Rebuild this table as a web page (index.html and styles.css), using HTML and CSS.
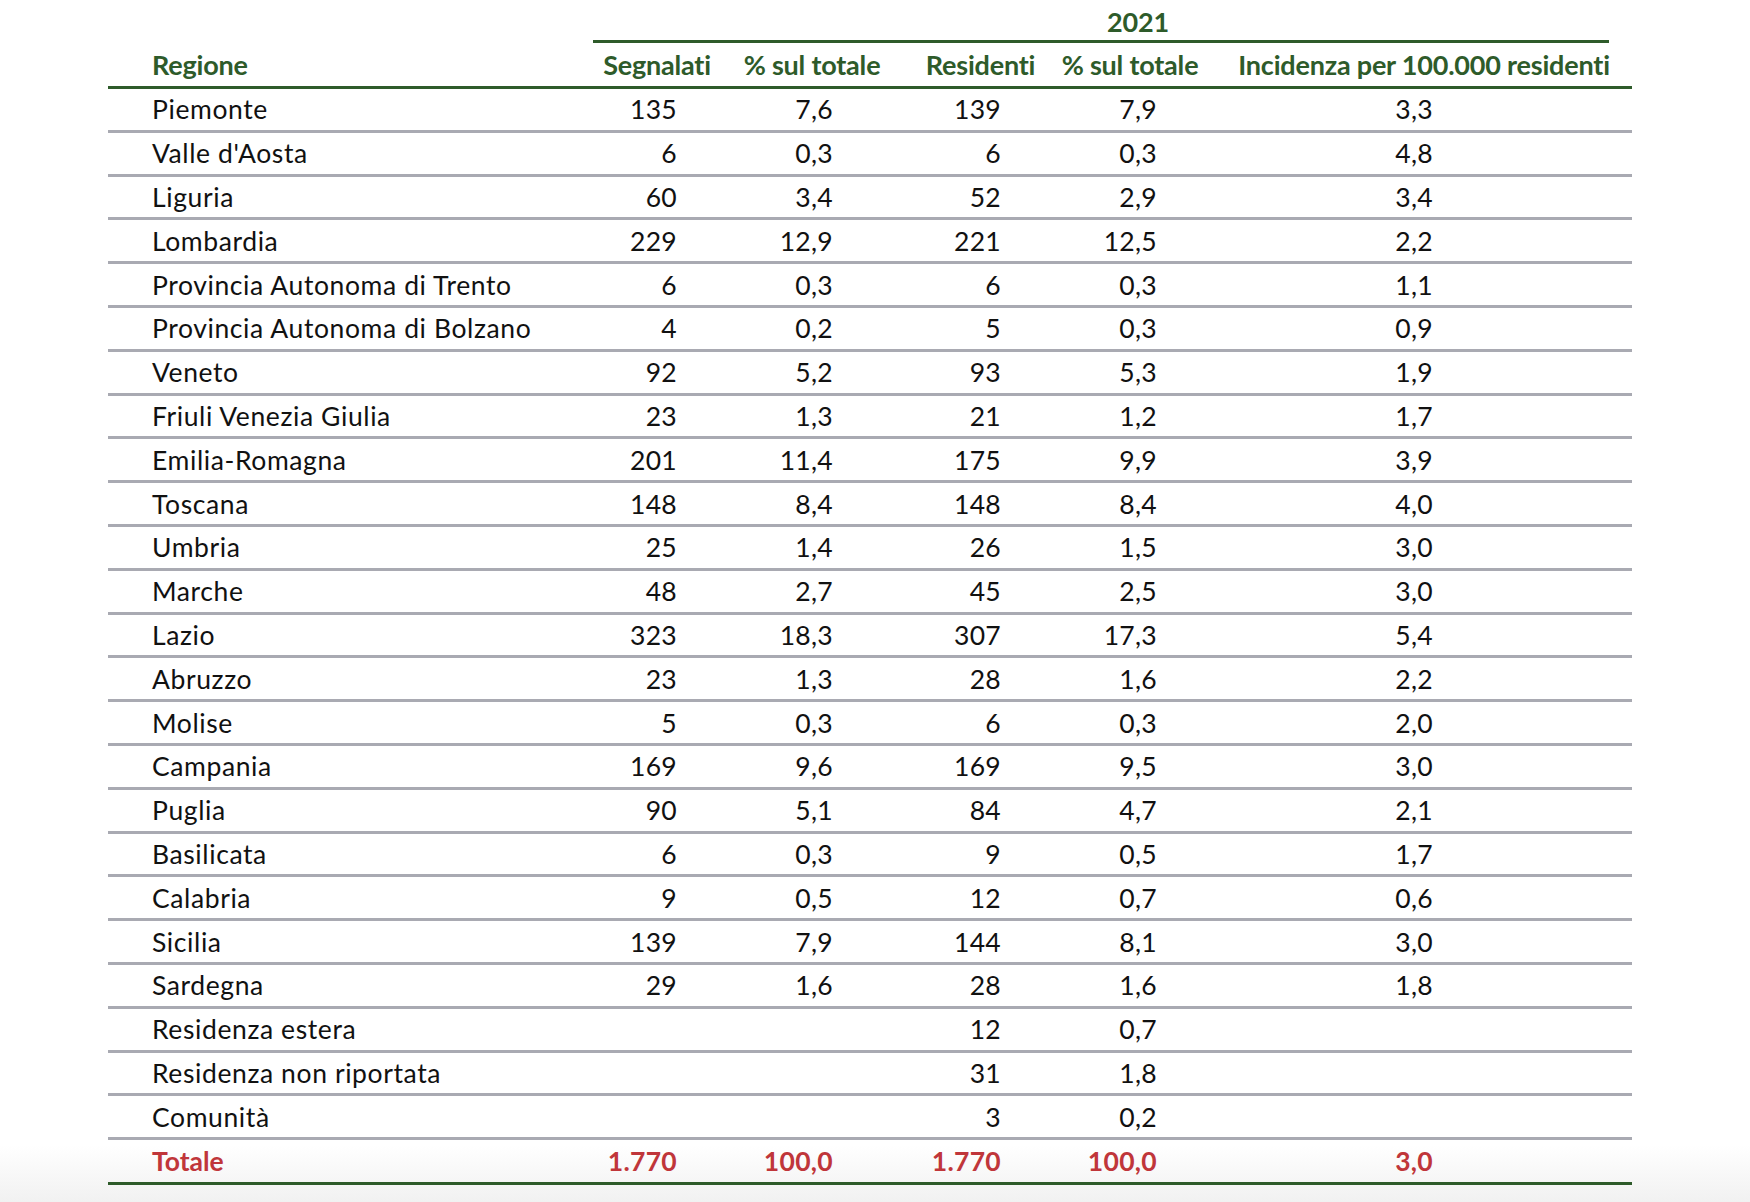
FILE: index.html
```html
<!DOCTYPE html>
<html lang="it">
<head>
<meta charset="utf-8">
<title>Segnalati e residenti 2021</title>
<link rel="stylesheet" href="styles.css">
</head>
<body>
<div class="page">
<table class="data">
  <colgroup>
    <col class="c-reg"><col class="c-seg"><col class="c-p1"><col class="c-res"><col class="c-p2"><col class="c-inc">
  </colgroup>
  <thead>
    <tr class="year-row">
      <th></th>
      <th colspan="5" class="year"><div class="year-label">2021</div></th>
    </tr>
    <tr class="head-row">
      <th class="reg">Regione</th>
      <th class="seg-h">Segnalati</th>
      <th>% sul totale</th>
      <th class="res-h">Residenti</th>
      <th>% sul totale</th>
      <th class="inc-h">Incidenza per 100.000 residenti</th>
    </tr>
  </thead>
  <tbody>
    <tr><td class="reg">Piemonte</td><td class="seg">135</td><td class="p1">7,6</td><td class="res">139</td><td class="p2">7,9</td><td class="inc">3,3</td></tr>
    <tr><td class="reg">Valle d'Aosta</td><td class="seg">6</td><td class="p1">0,3</td><td class="res">6</td><td class="p2">0,3</td><td class="inc">4,8</td></tr>
    <tr><td class="reg">Liguria</td><td class="seg">60</td><td class="p1">3,4</td><td class="res">52</td><td class="p2">2,9</td><td class="inc">3,4</td></tr>
    <tr><td class="reg">Lombardia</td><td class="seg">229</td><td class="p1">12,9</td><td class="res">221</td><td class="p2">12,5</td><td class="inc">2,2</td></tr>
    <tr><td class="reg">Provincia Autonoma di Trento</td><td class="seg">6</td><td class="p1">0,3</td><td class="res">6</td><td class="p2">0,3</td><td class="inc">1,1</td></tr>
    <tr><td class="reg">Provincia Autonoma di Bolzano</td><td class="seg">4</td><td class="p1">0,2</td><td class="res">5</td><td class="p2">0,3</td><td class="inc">0,9</td></tr>
    <tr><td class="reg">Veneto</td><td class="seg">92</td><td class="p1">5,2</td><td class="res">93</td><td class="p2">5,3</td><td class="inc">1,9</td></tr>
    <tr><td class="reg">Friuli Venezia Giulia</td><td class="seg">23</td><td class="p1">1,3</td><td class="res">21</td><td class="p2">1,2</td><td class="inc">1,7</td></tr>
    <tr><td class="reg">Emilia-Romagna</td><td class="seg">201</td><td class="p1">11,4</td><td class="res">175</td><td class="p2">9,9</td><td class="inc">3,9</td></tr>
    <tr><td class="reg">Toscana</td><td class="seg">148</td><td class="p1">8,4</td><td class="res">148</td><td class="p2">8,4</td><td class="inc">4,0</td></tr>
    <tr><td class="reg">Umbria</td><td class="seg">25</td><td class="p1">1,4</td><td class="res">26</td><td class="p2">1,5</td><td class="inc">3,0</td></tr>
    <tr><td class="reg">Marche</td><td class="seg">48</td><td class="p1">2,7</td><td class="res">45</td><td class="p2">2,5</td><td class="inc">3,0</td></tr>
    <tr><td class="reg">Lazio</td><td class="seg">323</td><td class="p1">18,3</td><td class="res">307</td><td class="p2">17,3</td><td class="inc">5,4</td></tr>
    <tr><td class="reg">Abruzzo</td><td class="seg">23</td><td class="p1">1,3</td><td class="res">28</td><td class="p2">1,6</td><td class="inc">2,2</td></tr>
    <tr><td class="reg">Molise</td><td class="seg">5</td><td class="p1">0,3</td><td class="res">6</td><td class="p2">0,3</td><td class="inc">2,0</td></tr>
    <tr><td class="reg">Campania</td><td class="seg">169</td><td class="p1">9,6</td><td class="res">169</td><td class="p2">9,5</td><td class="inc">3,0</td></tr>
    <tr><td class="reg">Puglia</td><td class="seg">90</td><td class="p1">5,1</td><td class="res">84</td><td class="p2">4,7</td><td class="inc">2,1</td></tr>
    <tr><td class="reg">Basilicata</td><td class="seg">6</td><td class="p1">0,3</td><td class="res">9</td><td class="p2">0,5</td><td class="inc">1,7</td></tr>
    <tr><td class="reg">Calabria</td><td class="seg">9</td><td class="p1">0,5</td><td class="res">12</td><td class="p2">0,7</td><td class="inc">0,6</td></tr>
    <tr><td class="reg">Sicilia</td><td class="seg">139</td><td class="p1">7,9</td><td class="res">144</td><td class="p2">8,1</td><td class="inc">3,0</td></tr>
    <tr><td class="reg">Sardegna</td><td class="seg">29</td><td class="p1">1,6</td><td class="res">28</td><td class="p2">1,6</td><td class="inc">1,8</td></tr>
    <tr><td class="reg">Residenza estera</td><td class="seg"></td><td class="p1"></td><td class="res">12</td><td class="p2">0,7</td><td class="inc"></td></tr>
    <tr><td class="reg">Residenza non riportata</td><td class="seg"></td><td class="p1"></td><td class="res">31</td><td class="p2">1,8</td><td class="inc"></td></tr>
    <tr><td class="reg">Comunità</td><td class="seg"></td><td class="p1"></td><td class="res">3</td><td class="p2">0,2</td><td class="inc"></td></tr>
  </tbody>
  <tfoot>
    <tr class="total"><td class="reg">Totale</td><td class="seg">1.770</td><td class="p1">100,0</td><td class="res">1.770</td><td class="p2">100,0</td><td class="inc">3,0</td></tr>
  </tfoot>
</table>
</div>
</body>
</html>
```

FILE: styles.css
```css
html {
  height: 1202px;
  background: linear-gradient(to bottom, #ffffff 0, #ffffff 1145px, #f1f1f1 1202px);
}
body {
  margin: 0;
  font-family: "Lato", "Open Sans", "Liberation Sans", sans-serif;
  color: #111;
}
.page {
  padding-left: 108px;
}
.data {
  border-collapse: collapse;
  table-layout: fixed;
  width: 1524px;
}
.c-reg { width: 485px; }
.c-seg { width: 134px; }
.c-p1 { width: 170px; }
.c-res { width: 163px; }
.c-p2 { width: 140px; }
.c-inc { width: 432px; }

th, td {
  padding: 0;
  white-space: nowrap;
}
thead th {
  color: #2e5b2a;
  font-weight: 700;
  font-size: 27px;
  letter-spacing: -0.2px;
}
.year-row th {
  height: 43px;
  vertical-align: bottom;
}
.year-label {
  margin-right: 23px;
  padding-left: 74px;
  text-align: center;
  border-bottom: 3px solid #2e5b2a;
  line-height: 37px;
}
.head-row th {
  height: 43px;
  text-align: center;
  border-bottom: 3px solid #2e5b2a;
  line-height: 40px;
}
.head-row th.reg {
  text-align: left;
  padding-left: 44px;
}
.head-row th.seg-h {
  padding-right: 6px;
}
.head-row th.res-h {
  padding-left: 4px;
}
.head-row th.inc-h {
  padding-left: 16px;
}
tbody td {
  height: 40.8px;
  font-size: 26.5px;
  letter-spacing: 0.6px;
  border-bottom: 3px solid #a9aab2;
}
td.reg {
  padding-left: 44px;
}
td.seg, td.p1, td.res, td.p2, td.inc {
  text-align: right;
  letter-spacing: 0.3px;
}
td.seg { padding-right: 50px; }
td.p1 { padding-right: 64px; }
td.res { padding-right: 59px; }
td.p2 { padding-right: 43px; }
td.inc { padding-right: 199px; }

.total td {
  height: 42px;
  font-size: 26.5px;
  font-weight: 700;
  color: #c0363a;
  border-bottom: 3px solid #2e5b2a;
}
```
